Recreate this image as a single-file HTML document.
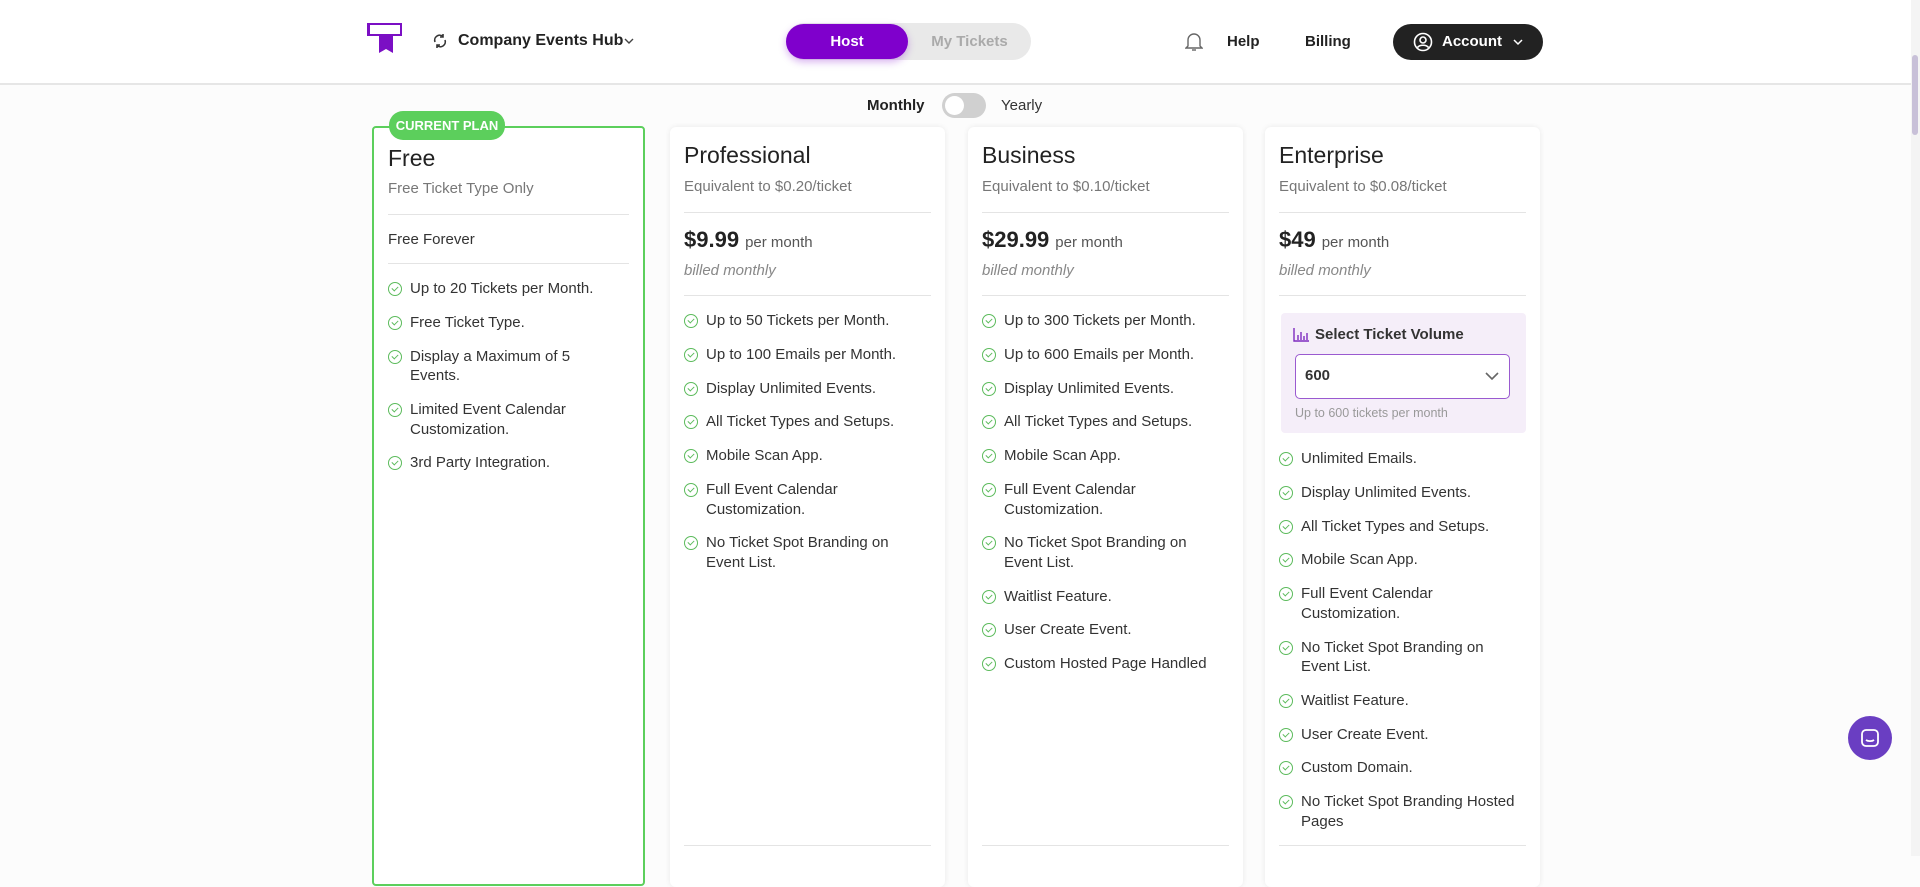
<!DOCTYPE html>
<html><head><meta charset="utf-8"><style>
*{box-sizing:border-box;margin:0;padding:0}
body{width:1920px;height:856px;overflow:hidden;background:#fcfcfc;font-family:"Liberation Sans",sans-serif;color:#222;position:relative}
.hdr{position:absolute;left:0;top:0;width:1911px;height:85px;background:#fff;border-bottom:2px solid #e6e6e6}
.abs{position:absolute}
.card{position:absolute;top:127px;width:275px;height:760px;background:#fff;border-radius:6px;box-shadow:0 0 6px rgba(0,0,0,.08)}
.card.free{top:126px;border:2px solid #5ccf5c;border-radius:4px;box-shadow:none}
.t{position:absolute;left:14px;font-size:23px;color:#222}
.s{position:absolute;left:14px;font-size:15px;color:#777}
.hr{position:absolute;left:14px;right:14px;height:1px;background:#e4e4e4}
.p{position:absolute;left:14px;font-size:15px;color:#555}
.p b{font-size:22px;color:#222;margin-right:6px}
.bm{position:absolute;left:14px;font-size:15px;color:#888;font-style:italic}
ul{position:absolute;left:14px;right:18px;list-style:none}
li{position:relative;padding-left:22px;font-size:15px;line-height:19.6px;color:#333;margin-bottom:14.2px}
li:before{content:"";position:absolute;left:0;top:3px;width:12px;height:12px;border:1.5px solid #5cbb5c;border-radius:50%}
li:after{content:"";position:absolute;left:4.5px;top:6px;width:3px;height:5px;border-right:1.5px solid #5cbb5c;border-bottom:1.5px solid #5cbb5c;transform:rotate(45deg)}
</style></head><body>
<div class="hdr"></div>
<svg class="abs" style="left:367px;top:23px" width="36" height="32" viewBox="0 0 36 32"><rect x="1" y="1" width="33" height="11" fill="#fff" stroke="#7b0fc4" stroke-width="2"/><rect x="0" y="0" width="3" height="13" fill="#7b0fc4"/><path d="M12 12h14v18l-7-4-7 4z" fill="#7b0fc4"/></svg>
<svg class="abs" style="left:432px;top:33px" width="16" height="16" viewBox="0 0 16 16" fill="none" stroke="#333" stroke-width="1.6"><path d="M3 9a5 5 0 0 1 8-5.5M13 7a5 5 0 0 1-8 5.5"/><path d="M11 1v3h-3M5 15v-3h3"/></svg>
<div class="abs" style="left:458px;top:32px;font-size:16px;font-weight:bold;color:#222">Company Events Hub</div>
<svg class="abs" style="left:624px;top:37px" width="10" height="8"><path d="M1 2l4 4 4-4" stroke="#444" fill="none" stroke-width="1.4"/></svg>
<div class="abs" style="left:786px;top:23px;width:245px;height:37px;border-radius:19px;background:#e9e9e9"></div>
<div class="abs" style="left:786px;top:24px;width:122px;height:35px;border-radius:18px;background:#7f00cc;box-shadow:0 3px 8px rgba(127,0,204,.3);color:#fff;font-weight:bold;font-size:15px;text-align:center;line-height:35px">Host</div>
<div class="abs" style="left:908px;top:24px;width:123px;line-height:35px;font-size:15px;color:#aaa;text-align:center;font-weight:bold">My Tickets</div>
<svg class="abs" style="left:1185px;top:32px" width="18" height="20" viewBox="0 0 18 20" fill="none" stroke="#666" stroke-width="1.4"><path d="M3 14V8a6 6 0 0 1 12 0v6l2 2H1z"/><path d="M7 18h4"/></svg>
<div class="abs" style="left:1227px;top:33px;font-size:15px;font-weight:bold">Help</div>
<div class="abs" style="left:1305px;top:33px;font-size:15px;font-weight:bold">Billing</div>
<div class="abs" style="left:1393px;top:24px;width:150px;height:36px;border-radius:18px;background:#222"></div>
<svg class="abs" style="left:1413px;top:32px" width="20" height="20" viewBox="0 0 20 20" fill="none" stroke="#fff" stroke-width="1.6"><circle cx="10" cy="10" r="8.5"/><circle cx="10" cy="8" r="3"/><path d="M4.5 15.5c2-3 9-3 11 0"/></svg>
<div class="abs" style="left:1442px;top:33px;font-size:15px;font-weight:bold;color:#fff">Account</div>
<svg class="abs" style="left:1513px;top:38px" width="10" height="8"><path d="M1 2l4 4 4-4" stroke="#fff" fill="none" stroke-width="1.5"/></svg>
<div class="abs" style="left:1911px;top:0;width:9px;height:856px;background:#f4f4f4"></div>
<div class="abs" style="left:1912px;top:55px;width:6px;height:80px;border-radius:3px;background:#c8c0d8"></div>

<div class="abs" style="left:867px;top:97px;font-size:15px;font-weight:bold">Monthly</div>
<div class="abs" style="left:942px;top:93px;width:44px;height:25px;border-radius:13px;background:#d0d0d0"></div>
<div class="abs" style="left:945px;top:96px;width:19px;height:19px;border-radius:50%;background:#fff"></div>
<div class="abs" style="left:1001px;top:97px;font-size:15px;color:#333">Yearly</div>

<div class="card free" style="left:372px;width:273px">
<div class="t" style="top:17px">Free</div>
<div class="s" style="top:52px">Free Ticket Type Only</div>
<div class="hr" style="top:86px"></div>
<div class="p" style="top:103px;color:#333">Free Forever</div>
<div class="hr" style="top:135px"></div>
<ul style="top:151px;right:45px"><li>Up to 20 Tickets per Month.</li><li>Free Ticket Type.</li><li>Display a Maximum of 5 Events.</li><li>Limited Event Calendar Customization.</li><li>3rd Party Integration.</li></ul>
</div>
<div class="abs" style="left:389px;top:111px;width:116px;height:29px;border-radius:14px;background:#5ccf5c;color:#fff;font-size:13px;font-weight:bold;text-align:center;line-height:29px">CURRENT PLAN</div>

<div class="card" style="left:670px">
<div class="t" style="top:15px">Professional</div><div class="s" style="top:51px">Equivalent to $0.20/ticket</div>
<div class="hr" style="top:85px"></div>
<div class="p" style="top:100px"><b>$9.99</b>per month</div><div class="bm" style="top:135px">billed monthly</div>
<div class="hr" style="top:168px"></div>
<ul style="top:184px"><li>Up to 50 Tickets per Month.</li><li>Up to 100 Emails per Month.</li><li>Display Unlimited Events.</li><li>All Ticket Types and Setups.</li><li>Mobile Scan App.</li><li>Full Event Calendar Customization.</li><li>No Ticket Spot Branding on Event List.</li></ul>
<div class="hr" style="top:718px"></div>
</div>

<div class="card" style="left:968px">
<div class="t" style="top:15px">Business</div><div class="s" style="top:51px">Equivalent to $0.10/ticket</div>
<div class="hr" style="top:85px"></div>
<div class="p" style="top:100px"><b>$29.99</b>per month</div><div class="bm" style="top:135px">billed monthly</div>
<div class="hr" style="top:168px"></div>
<ul style="top:184px"><li>Up to 300 Tickets per Month.</li><li>Up to 600 Emails per Month.</li><li>Display Unlimited Events.</li><li>All Ticket Types and Setups.</li><li>Mobile Scan App.</li><li>Full Event Calendar Customization.</li><li>No Ticket Spot Branding on Event List.</li><li>Waitlist Feature.</li><li>User Create Event.</li><li>Custom Hosted Page Handled</li></ul>
<div class="hr" style="top:718px"></div>
</div>

<div class="card" style="left:1265px">
<div class="t" style="top:15px">Enterprise</div><div class="s" style="top:51px">Equivalent to $0.08/ticket</div>
<div class="hr" style="top:85px"></div>
<div class="p" style="top:100px"><b>$49</b>per month</div><div class="bm" style="top:135px">billed monthly</div>
<div class="hr" style="top:168px"></div>
<div class="abs" style="left:16px;top:186px;width:245px;height:120px;background:#f5eef9;border-radius:4px"></div>
<svg class="abs" style="left:28px;top:201px" width="16" height="14" viewBox="0 0 16 14" fill="none" stroke="#7f2cc0" stroke-width="1.4"><path d="M1 0v13h15M5 7v5M8 4v8M11 8v4M14 5v7"/></svg>
<div class="abs" style="left:50px;top:199px;font-size:15px;font-weight:bold;color:#333">Select Ticket Volume</div>
<div class="abs" style="left:30px;top:227px;width:215px;height:45px;border:1.5px solid #9a5ad0;border-radius:5px;background:#fff"></div>
<div class="abs" style="left:40px;top:240px;font-size:15px;font-weight:bold;color:#333">600</div>
<svg class="abs" style="left:220px;top:245px" width="14" height="9"><path d="M1 1l6 6 6-6" stroke="#666" fill="none" stroke-width="1.6"/></svg>
<div class="abs" style="left:30px;top:279px;font-size:12.5px;color:#999">Up to 600 tickets per month</div>
<ul style="top:322px"><li>Unlimited Emails.</li><li>Display Unlimited Events.</li><li>All Ticket Types and Setups.</li><li>Mobile Scan App.</li><li>Full Event Calendar Customization.</li><li>No Ticket Spot Branding on Event List.</li><li>Waitlist Feature.</li><li>User Create Event.</li><li>Custom Domain.</li><li>No Ticket Spot Branding Hosted Pages</li></ul>
<div class="hr" style="top:718px"></div>
</div>

<div class="abs" style="left:1848px;top:716px;width:44px;height:44px;border-radius:50%;background:#6a3ec2"></div>
<svg class="abs" style="left:1860px;top:728px" width="20" height="20" viewBox="0 0 20 20" fill="none" stroke="#fff" stroke-width="1.8"><rect x="2" y="2" width="16" height="16" rx="4"/><path d="M6 12c2 1.5 6 1.5 8 0"/></svg>
</body></html>
